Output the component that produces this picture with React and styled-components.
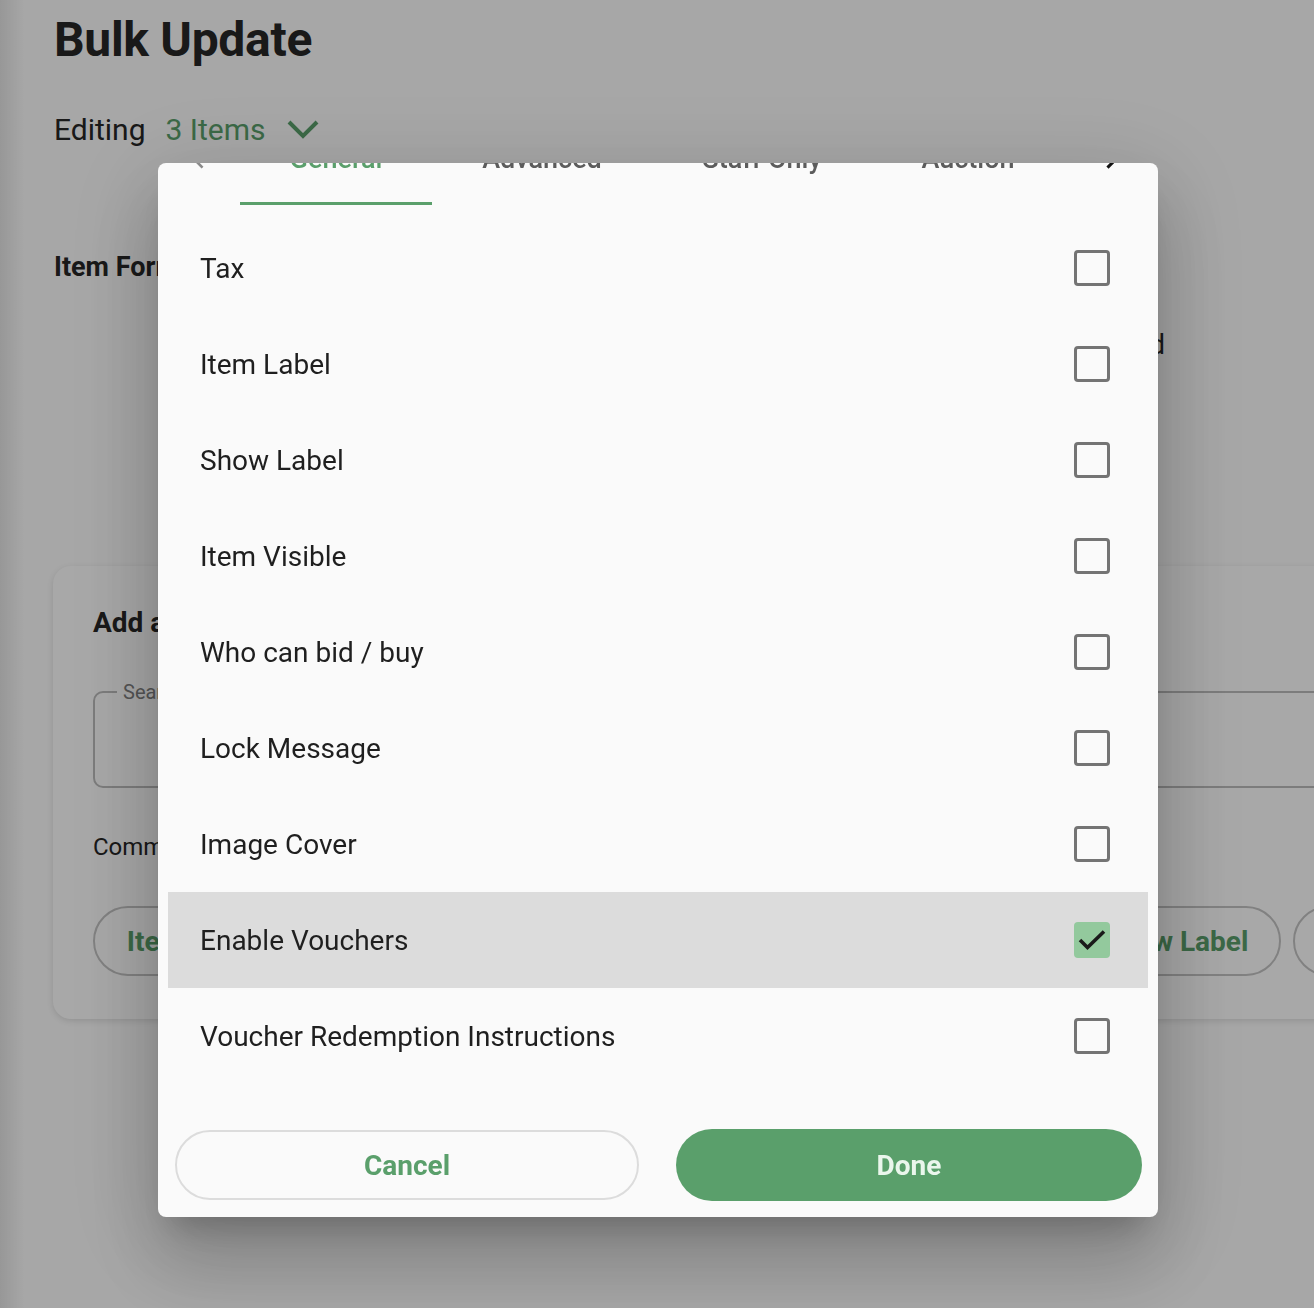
import React from "react";
import styled, { createGlobalStyle } from "styled-components";

const GREEN = "#5a9f6b";

const GlobalStyle = createGlobalStyle`
  html, body { margin: 0; padding: 0; }
  body {
    font-family: Roboto, "Noto Sans", "Liberation Sans", sans-serif;
    background: #fdfdfd;
    overflow: hidden;
    width: 1314px;
    height: 1308px;
  }
  * { box-sizing: border-box; }
`;

const Page = styled.div`
  position: relative;
  width: 1314px;
  height: 1308px;
  overflow: hidden;
  padding: 12px 0 0 54px;
  background: linear-gradient(90deg, #e6e6e6 0px, #fdfdfd 24px, #fdfdfd 100%);
`;

const Title = styled.h1`
  margin: 0;
  font-size: 48px;
  line-height: 56px;
  font-weight: 700;
  color: #262626;
  letter-spacing: -0.3px;
`;

const EditingRow = styled.div`
  margin-top: 44px;
  display: flex;
  align-items: center;
  gap: 20px;
  font-size: 30px;
  line-height: 36px;
  color: #262626;
`;

const GreenText = styled.span`
  color: ${GREEN};
`;

const SectionTitle = styled.div`
  margin-top: 103px;
  font-size: 27px;
  line-height: 32px;
  font-weight: 700;
  color: #262626;
`;

const FieldRow = styled.div`
  margin-top: 46px;
  width: 1111px;
  display: flex;
  justify-content: flex-end;
  font-size: 27px;
  line-height: 32px;
  color: #262626;
`;

const Card = styled.div`
  margin: 205px 0 0 -1px;
  width: 1400px;
  height: 453px;
  border-radius: 18px;
  background: #ffffff;
  box-shadow: 0 2px 6px rgba(0, 0, 0, 0.12);
  padding: 40px 0 0 40px;
`;

const CardTitle = styled.div`
  font-size: 28px;
  line-height: 34px;
  font-weight: 700;
  color: #262626;
`;

const SearchField = styled.fieldset`
  margin: 42px 0 0 0;
  height: 106px;
  width: 1300px;
  border: 2px solid #bdbdbd;
  border-radius: 10px;
  padding: 0 0 0 22px;
  legend {
    padding: 0 6px;
    font-size: 20px;
    color: #808080;
    line-height: 20px;
  }
`;

const CommonLabel = styled.div`
  margin-top: 44px;
  font-size: 24px;
  line-height: 30px;
  color: #262626;
`;

const ChipRow = styled.div`
  margin-top: 44px;
  display: flex;
  gap: 12px;
`;

const Chip = styled.div`
  flex: none;
  width: ${(p) => p.$w}px;
  height: 70px;
  border: 2px solid #c4c4c4;
  border-radius: 35px;
  display: flex;
  align-items: center;
  justify-content: center;
  font-size: 28px;
  font-weight: 700;
  color: ${GREEN};
  white-space: nowrap;
`;

const Overlay = styled.div`
  position: fixed;
  inset: 0;
  background: rgba(0, 0, 0, 0.34);
  display: flex;
  justify-content: center;
  align-items: flex-start;
  padding: 163px 0 0 2px;
`;

const Modal = styled.div`
  width: 1000px;
  height: 1054px;
  background: #fafafa;
  border-radius: 8px;
  overflow: hidden;
  display: flex;
  flex-direction: column;
  box-shadow: 0 22px 30px -14px rgba(0, 0, 0, 0.2),
    0 48px 76px 6px rgba(0, 0, 0, 0.14), 0 18px 92px 16px rgba(0, 0, 0, 0.12);
`;

const TabBar = styled.div`
  margin-top: -54px;
  height: 96px;
  flex: none;
  display: flex;
  align-items: stretch;
`;

const ScrollBtn = styled.div`
  width: ${(p) => p.$w}px;
  flex: none;
  display: flex;
  align-items: center;
  justify-content: center;
  color: ${(p) => (p.$dim ? "#8a8a8a" : "#111")};
`;

const Tab = styled.div`
  width: ${(p) => p.$w}px;
  flex: none;
  display: flex;
  align-items: center;
  justify-content: center;
  font-size: 27px;
  font-weight: 500;
  color: ${(p) => (p.$active ? GREEN : "#5c5c5c")};
  border-bottom: 3px solid ${(p) => (p.$active ? GREEN : "transparent")};
  padding-top: 6px;
`;

const List = styled.div`
  padding: 15px 10px 0;
  display: flex;
  flex-direction: column;
`;

const Row = styled.div`
  height: 96px;
  display: flex;
  align-items: center;
  justify-content: space-between;
  padding: 0 38px 0 32px;
  background: ${(p) => (p.$hl ? "#dcdcdc" : "transparent")};
  font-size: 28px;
  color: #1f1f1f;
`;

const Box = styled.div`
  width: 36px;
  height: 36px;
  border-radius: 4px;
  border: ${(p) => (p.$checked ? "none" : "3px solid #747474")};
  background: ${(p) => (p.$checked ? "#93c99d" : "transparent")};
  display: flex;
  align-items: center;
  justify-content: center;
`;

const Footer = styled.div`
  margin-top: auto;
  padding: 0 16px 16px 17px;
  display: flex;
  align-items: center;
  gap: 37px;
`;

const Button = styled.button`
  flex: none;
  width: ${(p) => (p.$primary ? 466 : 464)}px;
  height: ${(p) => (p.$primary ? 72 : 70)}px;
  border-radius: 36px;
  font-family: inherit;
  font-size: 28px;
  font-weight: 700;
  border: ${(p) => (p.$primary ? "none" : "2px solid #dcdcdc")};
  background: ${(p) => (p.$primary ? GREEN : "transparent")};
  color: ${(p) => (p.$primary ? "#eaf6ec" : GREEN)};
`;

const Chevron = ({ dir = "down", size = 34, color = "currentColor", w = 4 }) => {
  const d =
    dir === "down"
      ? "M3 9 L17 23 L31 9"
      : dir === "left"
      ? "M21 5 L9 17 L21 29"
      : "M13 5 L25 17 L13 29";
  return (
    <svg width={size} height={size} viewBox="0 0 34 34" fill="none">
      <path d={d} stroke={color} strokeWidth={w} strokeLinecap="butt" strokeLinejoin="miter" />
    </svg>
  );
};

const rows = [
  "Tax",
  "Item Label",
  "Show Label",
  "Item Visible",
  "Who can bid / buy",
  "Lock Message",
  "Image Cover",
  "Enable Vouchers",
  "Voucher Redemption Instructions",
];

export default function App() {
  return (
    <>
      <GlobalStyle />
      <Page>
        <Title>Bulk Update</Title>
        <EditingRow>
          <span>Editing</span>
          <GreenText>3 Items</GreenText>
          <Chevron dir="down" size={34} color={GREEN} w={4} />
        </EditingRow>
        <SectionTitle>Item Format</SectionTitle>
        <FieldRow>Featured</FieldRow>
        <Card>
          <CardTitle>Add a field</CardTitle>
          <SearchField>
            <legend>Search</legend>
          </SearchField>
          <CommonLabel>Common fields</CommonLabel>
          <ChipRow>
            <Chip $w={200}>Item Label</Chip>
            <Chip $w={230}>Item Visible</Chip>
            <Chip $w={250}>Lock Message</Chip>
            <Chip $w={250}>Image Cover</Chip>
            <Chip $w={210}>Show Label</Chip>
            <Chip $w={200}>Tax</Chip>
          </ChipRow>
        </Card>
      </Page>
      <Overlay>
        <Modal>
          <TabBar>
            <ScrollBtn $w={82} $dim>
              <Chevron dir="left" size={30} w={3} />
            </ScrollBtn>
            <Tab $w={192} $active>General</Tab>
            <Tab $w={220}>Advanced</Tab>
            <Tab $w={220}>Staff Only</Tab>
            <Tab $w={192}>Auction</Tab>
            <ScrollBtn $w={94}>
              <Chevron dir="right" size={30} w={3.5} />
            </ScrollBtn>
          </TabBar>
          <List>
            {rows.map((r) => {
              const checked = r === "Enable Vouchers";
              return (
                <Row key={r} $hl={checked}>
                  <span>{r}</span>
                  <Box $checked={checked}>
                    {checked && (
                      <svg width="32" height="32" viewBox="0 0 32 32" fill="none">
                        <path d="M4 16 L11.5 23.5 L28 7.5" stroke="#1a1a1a" strokeWidth="3.6" />
                      </svg>
                    )}
                  </Box>
                </Row>
              );
            })}
          </List>
          <Footer>
            <Button>Cancel</Button>
            <Button $primary>Done</Button>
          </Footer>
        </Modal>
      </Overlay>
    </>
  );
}
